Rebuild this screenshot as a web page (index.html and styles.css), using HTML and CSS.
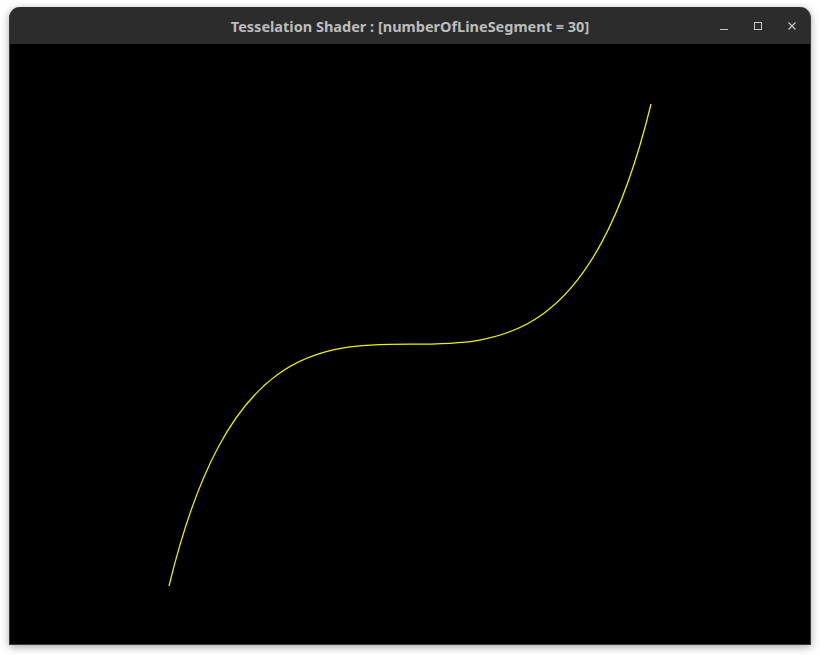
FILE: index.html
```html
<!DOCTYPE html>
<html>
<head>
<meta charset="utf-8">
<title>Tesselation Shader</title>
<link rel="stylesheet" href="styles.css">
</head>
<body>
<div class="window">
  <div class="titlebar">
    <div class="title">Tesselation Shader : [numberOfLineSegment = 30]</div>
    <div class="controls">
      <svg class="btn" width="12" height="12" viewBox="0 0 12 12"><path d="M2 9.5H10" stroke="#c9c9c9" stroke-width="1"/></svg>
      <svg class="btn" width="12" height="12" viewBox="0 0 12 12"><rect x="2.5" y="2.5" width="7" height="7" fill="none" stroke="#c9c9c9" stroke-width="1"/></svg>
      <svg class="btn" width="12" height="12" viewBox="0 0 12 12"><path d="M2.5 2.5L9.5 9.5M9.5 2.5L2.5 9.5" stroke="#c9c9c9" stroke-width="1.1"/></svg>
    </div>
  </div>
  <div class="canvas">
    <svg width="800" height="600" viewBox="0 0 800 600">
      <path d="M159 542 C 276 60, 524 540, 641 60" fill="none" stroke="#f0f000" stroke-width="1.25"/>
    </svg>
  </div>
</div>
</body>
</html>
```

FILE: styles.css
```css
html, body {
  margin: 0;
  padding: 0;
  background: #ffffff;
}
body {
  width: 820px;
  height: 655px;
  padding-top: 7px;
  padding-left: 9px;
  box-sizing: border-box;
  font-family: "Noto Sans", "DejaVu Sans", sans-serif;
}
.window {
  width: 802px;
  border-radius: 11px 11px 0 0;
  background: #2c2c2c;
  box-shadow: 0 2px 9px rgba(0, 0, 0, 0.35);
  border: 1px solid #3a3a3a;
  border-top: none;
  box-sizing: border-box;
  overflow: hidden;
}
.titlebar {
  height: 37px;
  display: flex;
  align-items: center;
  justify-content: center;
  position: relative;
}
.title {
  color: #bdbdbd;
  font-weight: 700;
  font-size: 14.5px;
  letter-spacing: 0;
  margin-top: 1px;
}
.controls {
  position: absolute;
  right: 12px;
  top: 13px;
  display: flex;
  gap: 22px;
}
.btn {
  display: block;
}
.canvas {
  width: 800px;
  height: 600px;
  background: #000000;
}
.canvas svg {
  display: block;
}
```
